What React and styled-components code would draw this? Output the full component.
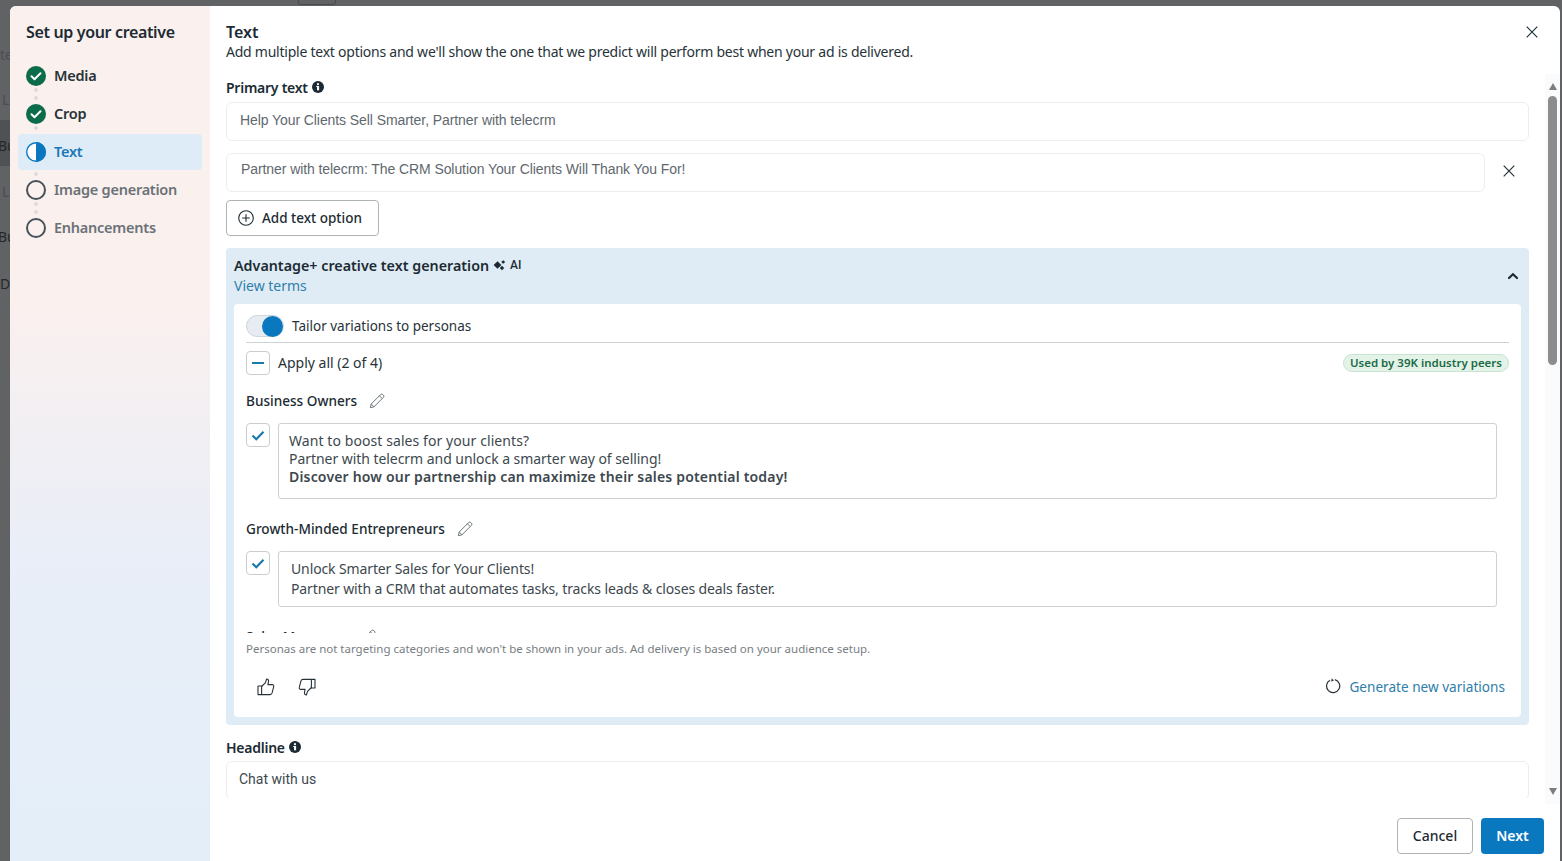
import React from 'react'
import styled, { createGlobalStyle } from 'styled-components'

const GlobalStyle = createGlobalStyle`
  html, body { margin: 0; padding: 0; height: 100%; overflow: hidden; }
  * { box-sizing: border-box; }
  body { font-family: "Noto Sans", "Liberation Sans", sans-serif; color: #1c2b33; }
`

const Backdrop = styled.div`
  position: relative;
  width: 1562px;
  height: 861px;
  padding: 6px 2px 0 10px;
  background: #616264;
  overflow: hidden;
`

const GhostBand = styled.div`
  position: absolute;
  left: 0;
  top: 120px;
  width: 10px;
  height: 46px;
  background: #505154;
`

const GhostButton = styled.div`
  position: absolute;
  left: 298px;
  top: -6px;
  width: 38px;
  height: 11px;
  border: 1px solid #4a4b4e;
  border-radius: 3px;
`

const GhostText = styled.span`
  position: absolute;
  left: ${p => p.$x}px;
  top: ${p => p.$y}px;
  font-size: 14px;
  color: ${p => p.$c};
`

const Modal = styled.div`
  position: relative;
  display: flex;
  height: 855px;
  border-radius: 6px 6px 0 0;
  background: #fff;
  overflow: hidden;
`

const Sidebar = styled.aside`
  width: 200px;
  flex: none;
  padding: 16px 8px;
  background: linear-gradient(180deg, #faf0ee 0%, #faf0ee 35%, #e9eef8 65%, #e3eef9 100%);
`

const SideTitle = styled.h2`
  margin: 0 0 16px 8px;
  font-size: 16px;
  line-height: 20px;
  font-weight: 600;
  letter-spacing: -0.35px;
  color: #1c2b33;
`

const Steps = styled.div`
  display: flex;
  flex-direction: column;
`

const Step = styled.div`
  position: relative;
  display: flex;
  align-items: center;
  gap: 8px;
  height: 36px;
  margin-bottom: 2px;
  padding-left: 8px;
  border-radius: 4px;
  font-size: 14.5px;
  font-weight: 600;
  letter-spacing: -0.25px;
  background: ${p => (p.$active ? '#deecf7' : 'transparent')};
  color: ${p => (p.$active ? '#1a78b8' : p.$todo ? '#6b7277' : '#283339')};
`

const StepLabel = styled.span`
  padding-bottom: 2px;
`

const StepDots = styled.span`
  position: absolute;
  left: 16px;
  top: ${p => (p.$active ? 38 : 30)}px;
  width: 4px;
  height: ${p => (p.$active ? 4 : 12)}px;
  background: radial-gradient(circle at 2px 2px, #dcdcdc 1.8px, transparent 2px) 0 0 / 4px 8px;
`

const Main = styled.main`
  flex: 1;
  min-width: 0;
  display: flex;
  flex-direction: column;
`

const Head = styled.header`
  position: relative;
  height: 68px;
  padding: 16px 16px 0;
`

const Title = styled.h1`
  margin: 0;
  font-size: 16px;
  line-height: 20px;
  font-weight: 600;
`

const Subtitle = styled.p`
  margin: 0;
  font-size: 14px;
  line-height: 20px;
  letter-spacing: -0.24px;
  color: #283339;
`

const CloseBtn = styled.button`
  position: absolute;
  right: 22px;
  top: 20px;
  display: flex;
  padding: 0;
  border: 0;
  background: none;
  color: #1c2b33;
`

const ScrollArea = styled.div`
  position: relative;
  height: 730px;
  display: flex;
  overflow: hidden;
`

const Content = styled.div`
  width: 1303px;
  margin-left: 16px;
  flex: none;
  height: 724px;
  overflow: hidden;
`

const Rail = styled.div`
  position: absolute;
  right: 0;
  top: 0;
  width: 15px;
  height: 100%;
  padding: 9px 0;
  display: flex;
  flex-direction: column;
  align-items: center;
  background: #fbfbfb;
`

const RailArrow = styled.span`
  width: 0;
  height: 0;
  border-left: 4.5px solid transparent;
  border-right: 4.5px solid transparent;
  ${p => (p.$down ? 'border-top: 7px solid #7d7d7d;' : 'border-bottom: 7px solid #7d7d7d;')}
  ${p => (p.$down ? 'margin-top: auto;' : '')}
`

const Thumb = styled.span`
  width: 9px;
  height: 269px;
  margin-top: 6px;
  border-radius: 5px;
  background: #8d8d8f;
`

const FieldLabel = styled.div`
  display: flex;
  align-items: center;
  gap: 4px;
  height: 20px;
  margin: ${p => p.$top || 0}px 0 ${p => p.$bottom}px;
  font-size: 14px;
  font-weight: 600;
  letter-spacing: -0.25px;
`

const OptionRow = styled.div`
  display: flex;
  align-items: center;
  margin-bottom: ${p => p.$gap || 0}px;
`

const TextInput = styled.div`
  flex: 1;
  height: 39px;
  padding: ${p => p.$pt}px ${p => p.$pl}px 0;
  border: 1px solid #ebedef;
  border-radius: 6px;
  font-family: ${p => (p.$dark ? 'Roboto, ' : '')}"Liberation Sans", sans-serif;
  font-size: 14px;
  line-height: 18px;
  letter-spacing: ${p => (p.$dark ? 0 : -0.08)}px;
  color: ${p => (p.$dark ? '#3d484e' : '#5f686e')};
`

const RemoveBtn = styled.button`
  width: 44px;
  display: flex;
  justify-content: center;
  padding: 0 0 3px 4px;
  border: 0;
  background: none;
  color: #1c2b33;
`

const AddBtn = styled.button`
  display: flex;
  align-items: center;
  gap: 8px;
  width: 153px;
  height: 36px;
  padding: 0 11px;
  border: 1px solid #aeb3b6;
  border-radius: 4px;
  background: #fff;
  font: 500 13.5px "Noto Sans", sans-serif;
  color: #1c2b33;
`

const AiPanel = styled.section`
  margin-top: 12px;
  padding: 0 8px 8px;
  border-radius: 4px;
  background: #e0ecf5;
`

const AiHead = styled.div`
  position: relative;
  height: 56px;
  padding-top: 7px;
`

const AiTitle = styled.div`
  display: flex;
  align-items: center;
  gap: 4px;
  height: 20px;
  font-size: 14.3px;
  font-weight: 600;
`

const AiBadge = styled.span`
  font-family: Roboto, sans-serif;
  font-size: 12px;
  font-weight: 500;
`

const LinkText = styled.a`
  display: block;
  margin-top: 1px;
  font-size: 14px;
  line-height: 20px;
  color: #2f7eab;
`

const Chevron = styled.span`
  position: absolute;
  right: 2px;
  top: 24px;
  display: flex;
  color: #1c2b33;
`

const AiCard = styled.div`
  height: 413px;
  padding: 0 12px;
  border-radius: 4px;
  background: #fff;
`

const ToggleRow = styled.div`
  display: flex;
  align-items: center;
  gap: 8px;
  height: 39px;
  padding-top: 6px;
  border-bottom: 1px solid #cfd3d6;
  font-size: 13.5px;
  color: #283339;
`

const Toggle = styled.span`
  display: flex;
  justify-content: flex-end;
  align-items: center;
  width: 38px;
  height: 22px;
  border: 1px solid #cfd6db;
  border-radius: 11px;
  background: #e6ecf1;
`

const Knob = styled.span`
  width: 21px;
  height: 21px;
  border-radius: 50%;
  background: #0a78be;
`

const ApplyRow = styled.div`
  display: flex;
  align-items: center;
  gap: 8px;
  height: 39px;
  font-size: 14px;
  color: #283339;
`

const CheckBox = styled.span`
  display: flex;
  flex: none;
  align-items: center;
  justify-content: center;
  width: 24px;
  height: 24px;
  border: 1px solid #c9cdd0;
  border-radius: 4px;
  background: #fff;
  color: #1a7aab;
`

const PeerBadge = styled.span`
  margin-left: auto;
  padding: 0 6px;
  height: 18px;
  line-height: 16px;
  border: 1px solid #c9e3d1;
  border-radius: 9px;
  background: #e4f3e8;
  font-size: 11.5px;
  font-weight: 600;
  color: #1a6b47;
  white-space: nowrap;
`

const PersonaList = styled.div`
  height: 251px;
  overflow: hidden;
`

const PersonaName = styled.div`
  display: flex;
  align-items: center;
  gap: 12px;
  height: 20px;
  padding-bottom: 2px;
  margin: ${p => p.$top}px 0 12px;
  font-size: 13.6px;
  font-weight: 500;
  color: #1c2b33;
  svg { margin-top: 2px; }
`

const PersonaRow = styled.div`
  display: flex;
  gap: 8px;
`

const CopyBox = styled.div`
  flex: 1;
  margin-right: 12px;
  height: ${p => p.$h}px;
  padding: ${p => p.$pad};
  border: 1px solid #ced0d4;
  border-radius: 3px;
  font-size: 14px;
  line-height: 18px;
  color: #3d484e;
  b { font-weight: 600; letter-spacing: 0.18px; }
`

const CopyLine = styled.div`
  line-height: ${p => p.$lh || 18}px;
  letter-spacing: ${p => p.$ls || 0}px;
`

const Disclaimer = styled.p`
  margin: 8px 0 0;
  font-size: 11.5px;
  line-height: 16px;
  color: #777e83;
`

const FeedbackRow = styled.div`
  display: flex;
  align-items: center;
  height: 44px;
  margin-top: 8px;
  padding: 0 4px 0 11px;
  gap: 23px;
  color: #283339;
`

const Generate = styled.a`
  display: flex;
  align-items: center;
  gap: 8px;
  margin: 0 0 2px auto;
  font-size: 13.6px;
  color: #2f7eab;
  svg { color: #283339; }
`

const Footer = styled.footer`
  flex: 1;
  display: flex;
  justify-content: flex-end;
  align-items: flex-start;
  gap: 8px;
  padding: 14px 16px 0 0;
`

const CancelBtn = styled.button`
  width: 76px;
  height: 36px;
  padding: 0 0 2px;
  border: 1px solid #aeb3b6;
  border-radius: 4px;
  background: #fff;
  font: 500 14px "Noto Sans", sans-serif;
  color: #1c2b33;
`

const NextBtn = styled.button`
  width: 63px;
  height: 36px;
  padding: 0 0 2px;
  border: 0;
  border-radius: 4px;
  background: #0a78be;
  font: 600 14px "Noto Sans", sans-serif;
  color: #fff;
`

const CheckCircle = () => (
  <svg width="20" height="20" viewBox="0 0 20 20">
    <circle cx="10" cy="10" r="10" fill="#0b6b4a" />
    <path d="M5.5 10.3l3 3 6-6" fill="none" stroke="#fff" strokeWidth="2" strokeLinecap="round" strokeLinejoin="round" />
  </svg>
)

const HalfCircle = () => (
  <svg width="20" height="20" viewBox="0 0 20 20">
    <circle cx="10" cy="10" r="9.3" fill="#fff" stroke="#0a78be" strokeWidth="1.4" />
    <path d="M10 0a10 10 0 0 1 0 20z" fill="#0a78be" />
  </svg>
)

const EmptyCircle = () => (
  <svg width="20" height="20" viewBox="0 0 20 20">
    <circle cx="10" cy="10" r="9" fill="none" stroke="#47525a" strokeWidth="2" />
  </svg>
)

const InfoIcon = () => (
  <svg width="12" height="12" viewBox="0 0 12 12">
    <circle cx="6" cy="6" r="6" fill="#1c2b33" />
    <rect x="5" y="5" width="2.1" height="4.3" fill="#fff" />
    <rect x="4.2" y="5" width="1.5" height="1" fill="#fff" />
    <circle cx="6" cy="3.2" r="1.1" fill="#fff" />
  </svg>
)

const CrossIcon = () => (
  <svg width="12" height="12" viewBox="0 0 12 12">
    <path d="M.7.7l10.6 10.6M11.3.7L.7 11.3" stroke="currentColor" strokeWidth="1.1" fill="none" />
  </svg>
)

const PlusCircle = () => (
  <svg width="16" height="16" viewBox="0 0 16 16" fill="none" stroke="#1c2b33" strokeWidth="1.1">
    <circle cx="8" cy="8" r="7.3" />
    <path d="M8 4.2v7.6M4.2 8h7.6" />
  </svg>
)

const Sparkle = () => (
  <svg width="13" height="12" viewBox="0 0 13 12" fill="#1c2b33">
    <path d="M4.5 2.2L8.4 6 4.5 9.8.6 6z" />
    <path d="M9 6.8l2.2 2.2L9 11.2 6.8 9z" />
    <path d="M10.2 1.2l2 1.8-2 1.8-2-1.8z" />
  </svg>
)

const ChevronUp = () => (
  <svg width="12" height="8" viewBox="0 0 12 8">
    <path d="M2 6l4-3.8L10 6" fill="none" stroke="currentColor" strokeWidth="2.2" strokeLinecap="round" />
  </svg>
)

const Tick = () => (
  <svg width="14" height="11" viewBox="0 0 14 11">
    <path d="M1.5 5.5l3.8 3.8L12.5 1.8" fill="none" stroke="currentColor" strokeWidth="2.2" />
  </svg>
)

const Dash = () => (
  <svg width="12" height="2" viewBox="0 0 12 2">
    <rect width="12" height="2" fill="currentColor" />
  </svg>
)

const Pencil = () => (
  <svg width="16" height="16" viewBox="0 0 16 16" fill="none" stroke="#6e767b" strokeWidth="1">
    <path d="M1.3 14.7l.9-3.7L11.6 1.6a1.6 1.6 0 0 1 2.3 0l.5.5a1.6 1.6 0 0 1 0 2.3L5 13.8z" />
    <path d="M2.2 11l2.8 2.8M10.4 2.8l2.8 2.8" />
  </svg>
)

const ThumbUp = () => (
  <svg width="18" height="18" viewBox="0 0 18 18" fill="none" stroke="#283339" strokeWidth="1.1" strokeLinejoin="round">
    <rect x="1" y="8" width="3.6" height="8.6" />
    <path d="M4.6 8.5L8.5 4.6 9.6 1c1.6 0 2.2 1.4 1.9 2.8L10.9 6.6h4.3c1.2 0 1.8 1 1.5 2l-1.6 6.3c-.3 1-1 1.7-2 1.7H4.6" />
  </svg>
)

const ThumbDown = () => (
  <svg width="18" height="18" viewBox="0 0 18 18" fill="none" stroke="#283339" strokeWidth="1.1" strokeLinejoin="round">
    <rect x="13.4" y="1.4" width="3.6" height="8.6" />
    <path d="M13.4 9.5L9.5 13.4 8.4 17c-1.6 0-2.2-1.4-1.9-2.8l.6-2.8H2.8c-1.2 0-1.8-1-1.5-2l1.6-6.3c.3-1 1-1.7 2-1.7h8.5" />
  </svg>
)

const Refresh = () => (
  <svg width="16" height="16" viewBox="0 0 16 16" fill="none">
    <path d="M9.8 1.6A6.6 6.6 0 1 1 5 2.2" stroke="#283339" strokeWidth="1.2" />
    <path d="M6.8 .2L8.8 2.4 6.2 3.8z" fill="#283339" />
  </svg>
)

const steps = [
  { label: 'Media', icon: <CheckCircle />, dots: true },
  { label: 'Crop', icon: <CheckCircle />, dots: true },
  { label: 'Text', icon: <HalfCircle />, active: true, dots: true },
  { label: 'Image generation', icon: <EmptyCircle />, todo: true, dots: true },
  { label: 'Enhancements', icon: <EmptyCircle />, todo: true }
]

const ghosts = [
  ['te', 0, 45, '#4c4d50'], ['L', 2, 90, '#4c4d50'], ['Bu', -2, 136, '#26272a'],
  ['L', 2, 182, '#4c4d50'], ['Bu', -2, 227, '#26272a'], ['Di', 0, 274, '#26272a']
]

export default function App() {
  return (
    <Backdrop>
      <GlobalStyle />
      <GhostBand />
      <GhostButton />
      {ghosts.map(([t, x, y, c]) => <GhostText key={t + y} $x={x} $y={y} $c={c}>{t}</GhostText>)}
      <Modal>
        <Sidebar>
          <SideTitle>Set up your creative</SideTitle>
          <Steps>
            {steps.map(s => (
              <Step key={s.label} $active={s.active} $todo={s.todo}>
                {s.icon}
                <StepLabel>{s.label}</StepLabel>
                {s.dots && <StepDots $active={s.active} />}
              </Step>
            ))}
          </Steps>
        </Sidebar>
        <Main>
          <Head>
            <Title>Text</Title>
            <Subtitle>Add multiple text options and we'll show the one that we predict will perform best when your ad is delivered.</Subtitle>
            <CloseBtn><CrossIcon /></CloseBtn>
          </Head>
          <ScrollArea>
            <Content>
              <FieldLabel $top={3} $bottom={5}>Primary text <InfoIcon /></FieldLabel>
              <OptionRow $gap={12}><TextInput $pt={8} $pl={13}>Help Your Clients Sell Smarter, Partner with telecrm</TextInput></OptionRow>
              <OptionRow $gap={8}>
                <TextInput $pt={6} $pl={14}>Partner with telecrm: The CRM Solution Your Clients Will Thank You For!</TextInput>
                <RemoveBtn><CrossIcon /></RemoveBtn>
              </OptionRow>
              <AddBtn><PlusCircle />Add text option</AddBtn>
              <AiPanel>
                <AiHead>
                  <AiTitle>Advantage+ creative text generation <Sparkle /><AiBadge>AI</AiBadge></AiTitle>
                  <LinkText>View terms</LinkText>
                  <Chevron><ChevronUp /></Chevron>
                </AiHead>
                <AiCard>
                  <ToggleRow><Toggle><Knob /></Toggle>Tailor variations to personas</ToggleRow>
                  <ApplyRow>
                    <CheckBox><Dash /></CheckBox>
                    Apply all (2 of 4)
                    <PeerBadge>Used by 39K industry peers</PeerBadge>
                  </ApplyRow>
                  <PersonaList>
                    <PersonaName $top={9}>Business Owners <Pencil /></PersonaName>
                    <PersonaRow>
                      <CheckBox><Tick /></CheckBox>
                      <CopyBox $h={76} $pad="8px 10px">
                        <CopyLine $ls={0.08}>Want to boost sales for your clients?</CopyLine>
                        <CopyLine $ls={-0.05}>Partner with telecrm and unlock a smarter way of selling!</CopyLine>
                        <CopyLine><b>Discover how our partnership can maximize their sales potential today!</b></CopyLine>
                      </CopyBox>
                    </PersonaRow>
                    <PersonaName $top={20}>Growth-Minded Entrepreneurs <Pencil /></PersonaName>
                    <PersonaRow>
                      <CheckBox><Tick /></CheckBox>
                      <CopyBox $h={56} $pad="7px 12px">
                        <CopyLine $lh={20} $ls={-0.12}>Unlock Smarter Sales for Your Clients!</CopyLine>
                        <CopyLine $lh={20} $ls={-0.12}>Partner with a CRM that automates tasks, tracks leads &amp; closes deals faster.</CopyLine>
                      </CopyBox>
                    </PersonaRow>
                    <PersonaName $top={20}>Sales Managers <Pencil /></PersonaName>
                  </PersonaList>
                  <Disclaimer>Personas are not targeting categories and won't be shown in your ads. Ad delivery is based on your audience setup.</Disclaimer>
                  <FeedbackRow>
                    <ThumbUp />
                    <ThumbDown />
                    <Generate><Refresh />Generate new variations</Generate>
                  </FeedbackRow>
                </AiCard>
              </AiPanel>
              <FieldLabel $top={12} $bottom={4}>Headline <InfoIcon /></FieldLabel>
              <OptionRow><TextInput $dark $pt={8} $pl={12}>Chat with us</TextInput></OptionRow>
            </Content>
            <Rail>
              <RailArrow />
              <Thumb />
              <RailArrow $down />
            </Rail>
          </ScrollArea>
          <Footer>
            <CancelBtn>Cancel</CancelBtn>
            <NextBtn>Next</NextBtn>
          </Footer>
        </Main>
      </Modal>
    </Backdrop>
  )
}
